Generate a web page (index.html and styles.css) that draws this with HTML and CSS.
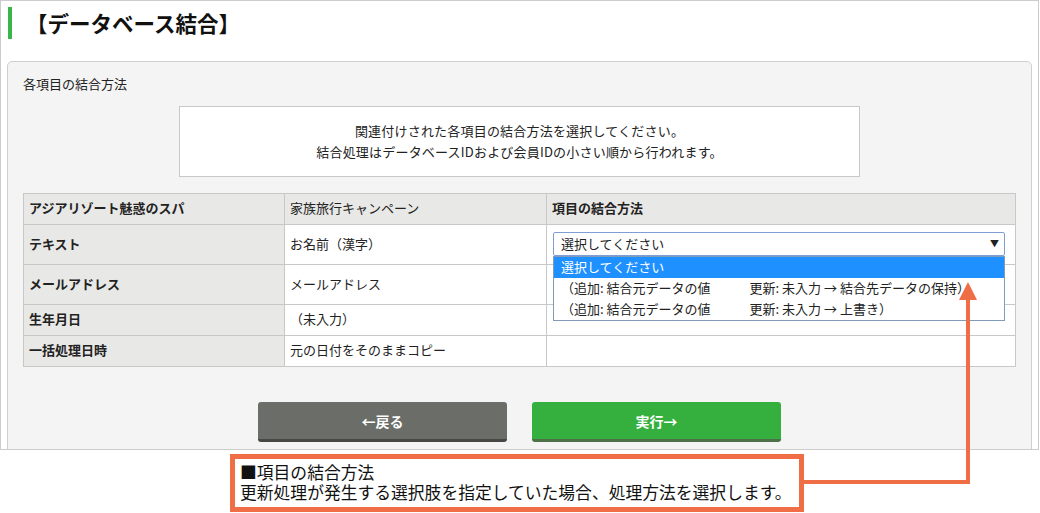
FILE: index.html
```html
<!DOCTYPE html>
<html lang="ja">
<head>
<meta charset="utf-8">
<title>データベース結合</title>
<link rel="stylesheet" href="styles.css">
</head>
<body>
<div class="frame">
  <h1 class="title">【データベース結合】</h1>
  <section class="panel">
    <h2 class="panel-label">各項目の結合方法</h2>
    <div class="info">
      <p>関連付けされた各項目の結合方法を選択してください。</p>
      <p>結合処理はデータベースIDおよび会員IDの小さい順から行われます。</p>
    </div>
    <table class="map">
      <colgroup><col class="c1"><col class="c2"><col class="c3"></colgroup>
      <thead>
        <tr><th>アジアリゾート魅惑のスパ</th><th class="plain">家族旅行キャンペーン</th><th>項目の結合方法</th></tr>
      </thead>
      <tbody>
        <tr class="sel-row">
          <th>テキスト</th>
          <td>お名前（漢字）</td>
          <td class="sel-cell">
            <div class="combo">
              <div class="select"><span>選択してください</span><span class="caret">▼</span></div>
              <ul class="listbox">
                <li class="active">選択してください</li>
                <li>（追加: 結合元データの値　　　更新: 未入力 → 結合先データの保持）</li>
                <li>（追加: 結合元データの値　　　更新: 未入力 → 上書き）</li>
              </ul>
            </div>
          </td>
        </tr>
        <tr class="sel-row">
          <th>メールアドレス</th>
          <td>メールアドレス</td>
          <td class="sel-cell">
            <div class="combo">
              <div class="select"><span>選択してください</span><span class="caret">▼</span></div>
            </div>
          </td>
        </tr>
        <tr>
          <th>生年月日</th>
          <td>（未入力）</td>
          <td></td>
        </tr>
        <tr>
          <th>一括処理日時</th>
          <td>元の日付をそのままコピー</td>
          <td></td>
        </tr>
      </tbody>
    </table>
    <div class="actions">
      <button class="btn btn-back" type="button">←戻る</button>
      <button class="btn btn-run" type="button">実行→</button>
    </div>
  </section>
</div>
<div class="callout">
  <p>■項目の結合方法</p>
  <p>更新処理が発生する選択肢を指定していた場合、処理方法を選択します。</p>
</div>
<svg class="annot" width="1040" height="513" viewBox="0 0 1040 513" aria-hidden="true">
  <polyline points="804,482 968,482 968,296" fill="none" stroke="#f06e46" stroke-width="4"/>
  <polygon points="968,282 959,300 977,300" fill="#f06e46"/>
</svg>
</body>
</html>
```

FILE: styles.css
```css
* { box-sizing: border-box; }
html, body { margin: 0; padding: 0; background: #fff; }
body {
  font-family: "Noto Sans CJK JP", "Noto Sans", sans-serif;
  color: #222;
  width: 1040px;
  height: 513px;
  overflow: hidden;
  position: relative;
}
.frame {
  width: 1039px;
  height: 450px;
  border: 1px solid #cccccc;
  overflow: hidden;
}
.title {
  margin: 6px 0 0 7px;
  height: 32px;
  border-left: 4px solid #3ab54a;
  padding-left: 14px;
  font-size: 21.5px;
  line-height: 31px;
  font-weight: 700;
  color: #111;
}
.panel {
  margin: 22px 6px 0;
  background: #f4f4f4;
  border: 1px solid #cfcfcf;
  border-radius: 5px;
  padding: 13px 15px 60px;
}
.panel-label {
  margin: 0;
  font-size: 13px;
  font-weight: 400;
  line-height: 18px;
}
.info {
  width: 681px;
  margin: 13px auto 0;
  background: #fff;
  border: 1px solid #c8c8c8;
  padding: 13px 0 14px;
  text-align: center;
  font-size: 13px;
  line-height: 21px;
  letter-spacing: 0.2px;
}
.info p { margin: 0; }
.map {
  width: 100%;
  margin-top: 16px;
  border-collapse: collapse;
  table-layout: fixed;
  font-size: 13px;
  line-height: 18px;
}
.map .c1 { width: 261px; }
.map .c2 { width: 262px; }
.map th, .map td {
  border: 1px solid #c8c8c8;
  padding: 5px 5px 7px;
  text-align: left;
  vertical-align: middle;
  white-space: nowrap;
}
.map th { background: #e8e8e6; font-weight: 700; }
.map th.plain { font-weight: 400; }
.map td { background: #fff; }
.map td.sel-cell { padding: 7px 10px 8px 6px; }
.combo { position: relative; }
.select {
  height: 24px;
  border: 1px solid #7f9ed6;
  border-radius: 2px;
  background: #fff;
  display: flex;
  align-items: center;
  justify-content: space-between;
  padding: 0 5px 0 7px;
  font-size: 13px;
}
.caret { font-size: 9px; color: #222; }
.listbox {
  position: absolute;
  left: 0;
  right: 0;
  top: 100%;
  margin: 0;
  padding: 0;
  list-style: none;
  background: #fff;
  border: 1px solid #7f9db9;
  z-index: 5;
}
.listbox li {
  height: 21px;
  line-height: 20px;
  padding-left: 7px;
  white-space: nowrap;
  font-size: 13px;
}
.listbox li.active { background: #1e90ff; color: #fff; }
.actions {
  display: flex;
  justify-content: center;
  gap: 25px;
  margin-top: 35px;
}
.btn {
  width: 249px;
  height: 40px;
  border: 0;
  border-bottom: 3px solid;
  border-radius: 3px;
  color: #fff;
  font-weight: 700;
  font-size: 14px;
  font-family: inherit;
  display: flex;
  align-items: center;
  justify-content: center;
  padding: 0;
}
.btn-back { background: #6b6e68; border-color: #464844; }
.btn-run { background: #35b03e; border-color: #4e7049; }
.callout {
  margin: 4px 0 0 230px;
  width: 574px;
  height: 58px;
  border: 5px solid #f06e46;
  padding: 3px 0 0 5px;
  font-size: 16.8px;
  line-height: 20px;
  white-space: nowrap;
  color: #111;
  background: #fff;
}
.callout p { margin: 0; }
.annot {
  position: absolute;
  top: 0;
  left: 0;
  pointer-events: none;
  z-index: 10;
}
```
